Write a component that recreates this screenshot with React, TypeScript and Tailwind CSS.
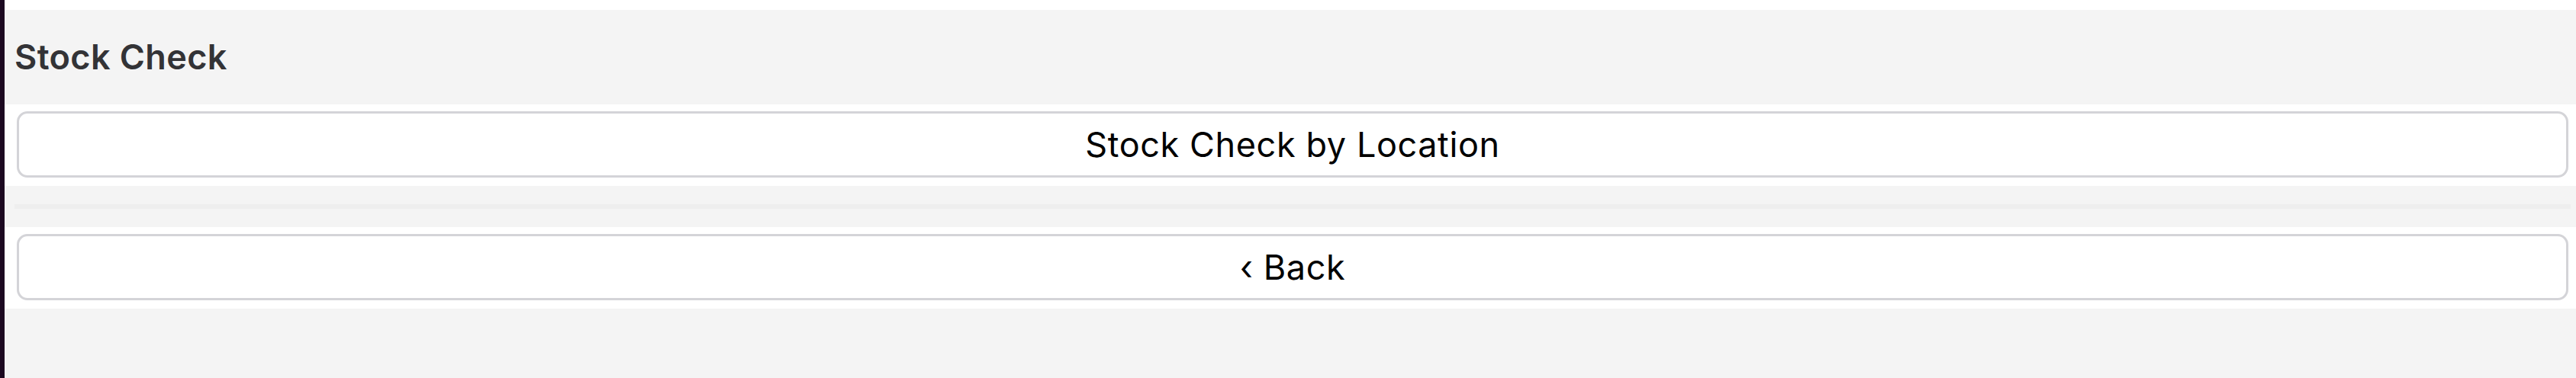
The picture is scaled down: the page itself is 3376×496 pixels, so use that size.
export default function App() {
  return (
    <div className="flex min-h-[496px] font-['Inter',sans-serif]">
      <div className="w-[6px] shrink-0 bg-[#1c0921]" />
      <main className="flex flex-1 flex-col bg-[#f4f4f4]">
        <div className="h-[13px] bg-white" />
        <header className="flex h-[124px] items-center px-[13px]">
          <h1 className="text-[45px] font-semibold tracking-[0.4px] text-[#333336]">Stock Check</h1>
        </header>
        <section className="bg-white pb-[11px] pt-[9px]">
          <button className="ml-[16px] mr-[10px] flex h-[87px] w-[calc(100%-26px)] items-center justify-center rounded-[14px] border-[3px] border-[#d4d4d8] bg-white text-[45px] tracking-[0.6px] text-black">
            Stock Check by Location
          </button>
        </section>
        <div className="flex h-[54px] items-center pl-[13px] pr-[7px]">
          <div className="h-[6px] w-full bg-[#eeeeee]" />
        </div>
        <section className="bg-white pb-[11px] pt-[9px]">
          <button className="ml-[16px] mr-[10px] flex h-[87px] w-[calc(100%-26px)] items-center justify-center rounded-[14px] border-[3px] border-[#d4d4d8] bg-white text-[45px] tracking-[0.6px] text-black">
            ‹ Back
          </button>
        </section>
        <div className="flex-1" />
      </main>
    </div>
  );
}
